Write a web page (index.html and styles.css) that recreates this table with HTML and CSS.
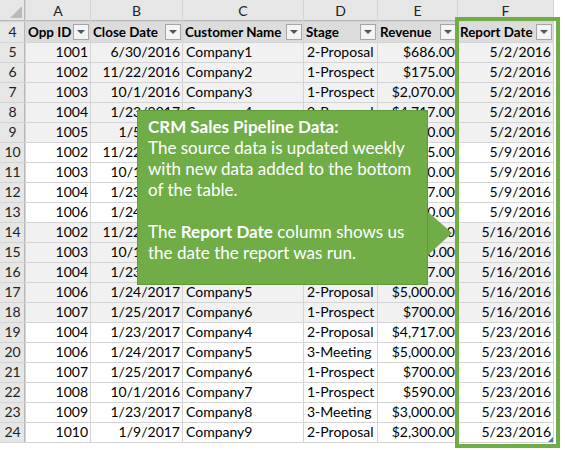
FILE: index.html
```html
<!DOCTYPE html>
<html>
<head>
<meta charset="utf-8">
<link rel="stylesheet" href="styles.css">
</head>
<body>
<div class="page">
  <div class="sheet">
    <div class="corner"><span class="corner-tri"></span></div>
    <div class="colhead">A</div>
    <div class="colhead">B</div>
    <div class="colhead">C</div>
    <div class="colhead">D</div>
    <div class="colhead">E</div>
    <div class="colhead">F</div>

    <div class="rowhead">4</div>
    <div class="th"><span>Opp ID</span><i class="filter"></i></div>
    <div class="th"><span>Close Date</span><i class="filter"></i></div>
    <div class="th"><span>Customer Name</span><i class="filter"></i></div>
    <div class="th"><span>Stage</span><i class="filter"></i></div>
    <div class="th"><span>Revenue</span><i class="filter"></i></div>
    <div class="th"><span>Report Date</span><i class="filter"></i></div>

    <div class="rowhead">5</div><div class="td r g">1001</div><div class="td r g">6/30/2016</div><div class="td g">Company1</div><div class="td g">2-Proposal</div><div class="td r g">$686.00</div><div class="td r g">5/2/2016</div>
    <div class="rowhead">6</div><div class="td r g">1002</div><div class="td r g">11/22/2016</div><div class="td g">Company2</div><div class="td g">1-Prospect</div><div class="td r g">$175.00</div><div class="td r g">5/2/2016</div>
    <div class="rowhead">7</div><div class="td r g">1003</div><div class="td r g">10/1/2016</div><div class="td g">Company3</div><div class="td g">1-Prospect</div><div class="td r g">$2,070.00</div><div class="td r g">5/2/2016</div>
    <div class="rowhead">8</div><div class="td r g">1004</div><div class="td r g">1/23/2017</div><div class="td g">Company4</div><div class="td g">2-Proposal</div><div class="td r g">$4,717.00</div><div class="td r g">5/2/2016</div>
    <div class="rowhead">9</div><div class="td r g">1005</div><div class="td r g">1/5/2017</div><div class="td g">Company10</div><div class="td g">1-Prospect</div><div class="td r g">$900.00</div><div class="td r g">5/2/2016</div>
    <div class="rowhead">10</div><div class="td r">1002</div><div class="td r">11/22/2016</div><div class="td">Company2</div><div class="td">1-Prospect</div><div class="td r">$175.00</div><div class="td r">5/9/2016</div>
    <div class="rowhead">11</div><div class="td r">1003</div><div class="td r">10/1/2016</div><div class="td">Company3</div><div class="td">1-Prospect</div><div class="td r">$2,070.00</div><div class="td r">5/9/2016</div>
    <div class="rowhead">12</div><div class="td r">1004</div><div class="td r">1/23/2017</div><div class="td">Company4</div><div class="td">2-Proposal</div><div class="td r">$4,717.00</div><div class="td r">5/9/2016</div>
    <div class="rowhead">13</div><div class="td r">1006</div><div class="td r">1/24/2017</div><div class="td">Company5</div><div class="td">2-Proposal</div><div class="td r">$5,000.00</div><div class="td r">5/9/2016</div>
    <div class="rowhead">14</div><div class="td r g">1002</div><div class="td r g">11/22/2016</div><div class="td g">Company2</div><div class="td g">1-Prospect</div><div class="td r g">$175.00</div><div class="td r g">5/16/2016</div>
    <div class="rowhead">15</div><div class="td r g">1003</div><div class="td r g">10/1/2016</div><div class="td g">Company3</div><div class="td g">1-Prospect</div><div class="td r g">$2,070.00</div><div class="td r g">5/16/2016</div>
    <div class="rowhead">16</div><div class="td r g">1004</div><div class="td r g">1/23/2017</div><div class="td g">Company4</div><div class="td g">2-Proposal</div><div class="td r g">$4,717.00</div><div class="td r g">5/16/2016</div>
    <div class="rowhead">17</div><div class="td r g">1006</div><div class="td r g">1/24/2017</div><div class="td g">Company5</div><div class="td g">2-Proposal</div><div class="td r g">$5,000.00</div><div class="td r g">5/16/2016</div>
    <div class="rowhead">18</div><div class="td r g">1007</div><div class="td r g">1/25/2017</div><div class="td g">Company6</div><div class="td g">1-Prospect</div><div class="td r g">$700.00</div><div class="td r g">5/16/2016</div>
    <div class="rowhead">19</div><div class="td r">1004</div><div class="td r">1/23/2017</div><div class="td">Company4</div><div class="td">2-Proposal</div><div class="td r">$4,717.00</div><div class="td r">5/23/2016</div>
    <div class="rowhead">20</div><div class="td r">1006</div><div class="td r">1/24/2017</div><div class="td">Company5</div><div class="td">3-Meeting</div><div class="td r">$5,000.00</div><div class="td r">5/23/2016</div>
    <div class="rowhead">21</div><div class="td r">1007</div><div class="td r">1/25/2017</div><div class="td">Company6</div><div class="td">1-Prospect</div><div class="td r">$700.00</div><div class="td r">5/23/2016</div>
    <div class="rowhead">22</div><div class="td r">1008</div><div class="td r">10/1/2016</div><div class="td">Company7</div><div class="td">1-Prospect</div><div class="td r">$590.00</div><div class="td r">5/23/2016</div>
    <div class="rowhead">23</div><div class="td r">1009</div><div class="td r">1/23/2017</div><div class="td">Company8</div><div class="td">3-Meeting</div><div class="td r">$3,000.00</div><div class="td r">5/23/2016</div>
    <div class="rowhead">24</div><div class="td r">1010</div><div class="td r">1/9/2017</div><div class="td">Company9</div><div class="td">2-Proposal</div><div class="td r">$2,300.00</div><div class="td r">5/23/2016<span class="handle"></span></div>
  </div>

  <div class="frame"></div>

  <div class="callout">
    <b>CRM Sales Pipeline Data:</b><br>
    The source data is updated weekly<br>
    with new data added to the bottom<br>
    of the table.<br>
    <br>
    The <b>Report Date</b> column shows us<br>
    the date the report was run.
  </div>
</div>
</body>
</html>
```

FILE: styles.css
```css
html, body {
  margin: 0;
  padding: 0;
  background: #ffffff;
}

.page {
  position: relative;
  width: 565px;
  height: 450px;
  overflow: hidden;
  font-family: "Lato", "Liberation Sans", sans-serif;
}

.sheet {
  display: grid;
  grid-template-columns: 25px 64px 91px 120px 73px 79px 95px;
  grid-template-rows: 21px 20px repeat(20, 19px);
  gap: 1px;
  padding: 0 1px 1px 0;
  width: fit-content;
  background: #d4d4d4;
  font-size: 14px;
  color: #000;
}

.corner {
  background: #e6e6e6;
  position: relative;
  box-shadow: inset -1px -1px 0 #b8b8b8;
}

.corner-tri {
  position: absolute;
  right: 3px;
  bottom: 3px;
  width: 0;
  height: 0;
  border-left: 12px solid transparent;
  border-bottom: 12px solid #b9b9b9;
}

.colhead {
  background: #e6e6e6;
  color: #222;
  display: flex;
  align-items: center;
  justify-content: center;
  font-size: 14px;
  box-shadow: inset 0 -1px 0 #b8b8b8;
}

.rowhead {
  background: #e6e6e6;
  color: #222;
  display: flex;
  align-items: flex-end;
  justify-content: center;
  padding-bottom: 1px;
  line-height: 18px;
  box-shadow: inset -1px 0 0 #b8b8b8;
}

.th {
  background: #dcdcdc;
  display: flex;
  align-items: center;
  justify-content: space-between;
  padding: 0 1px 0 2px;
  font-weight: bold;
  font-size: 13.4px;
  white-space: nowrap;
  overflow: hidden;
}

.filter {
  position: relative;
  flex: none;
  width: 14px;
  height: 14px;
  margin-left: 2px;
  border: 1px solid #a6a6a6;
  background: #f4f4f4;
}

.filter::after {
  content: "";
  position: absolute;
  left: 3px;
  top: 5px;
  border-left: 4px solid transparent;
  border-right: 4px solid transparent;
  border-top: 4px solid #555;
}

.td {
  background: #ffffff;
  display: flex;
  align-items: flex-end;
  padding: 0 2px 1px 3px;
  line-height: 18px;
  white-space: nowrap;
  overflow: visible;
  position: relative;
}

.td.g {
  background: #f1f1f1;
}

.td.r {
  justify-content: flex-end;
}

.handle {
  position: absolute;
  right: 0;
  bottom: 0;
  width: 0;
  height: 0;
  border-left: 5px solid transparent;
  border-bottom: 5px solid #4472c4;
}

.frame {
  position: absolute;
  left: 455px;
  top: 17px;
  width: 105px;
  height: 431px;
  box-sizing: border-box;
  border: 4px solid #70ad47;
}

.callout {
  position: absolute;
  left: 137px;
  top: 110px;
  width: 291px;
  height: 175px;
  box-sizing: border-box;
  padding: 5px 0 0 10px;
  background: #70ad47;
  border: 1px solid #5f9a3a;
  color: #ffffff;
  font-size: 17px;
  line-height: 21px;
}

.callout::after {
  content: "";
  position: absolute;
  right: -25px;
  top: 101px;
  width: 0;
  height: 0;
  border-left: 24px solid #70ad47;
  border-top: 21px solid transparent;
  border-bottom: 22px solid transparent;
}
```
